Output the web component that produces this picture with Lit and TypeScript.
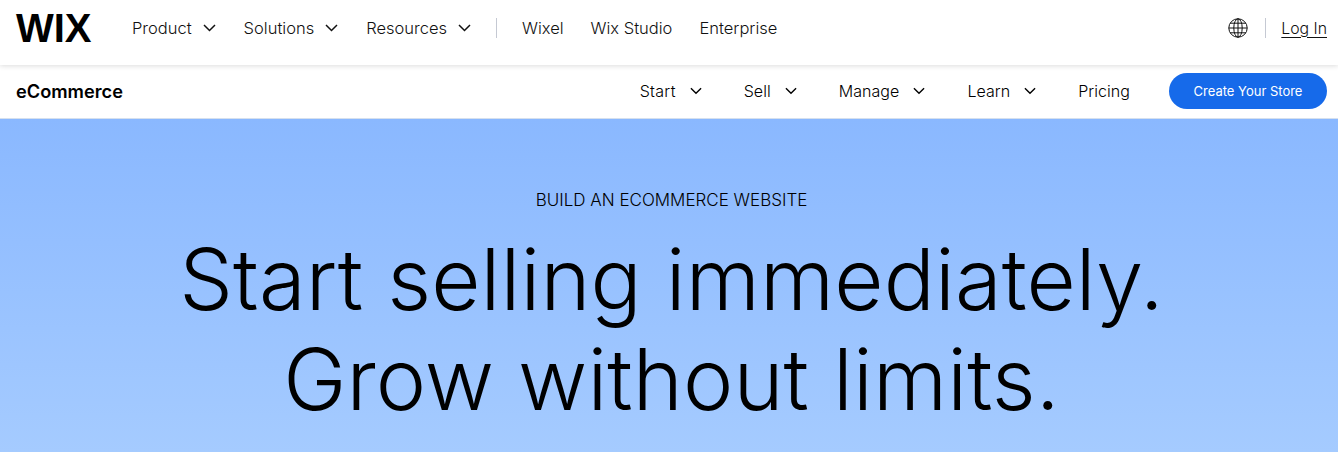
import {css, html, LitElement} from "lit";
import {customElement} from "lit/decorators.js";

const chevron = html`<svg class="chevron" viewBox="0 0 13 8" width="13" height="8"><path d="M1 1l5.5 5.5L12 1" fill="none" stroke="currentColor" stroke-width="1.5"/></svg>`;

@customElement("app-root")
export default class AppRoot extends LitElement {
    static styles = css`
        :host {
            display: block;
            height: 452px;
            overflow: hidden;
            font-family: Inter, "Liberation Sans", sans-serif;
            color: #000;
            background: #fff;
        }

        .top {
            position: relative;
            z-index: 1;
            display: flex;
            align-items: center;
            height: 65px;
            padding: 0 11px 9px 16px;
            box-sizing: border-box;
            background: #fff;
            box-shadow: 0 1px 5px rgba(0, 0, 0, 0.14);
            font-size: 16.5px;
            font-weight: 300;
            color: #111;
        }

        .logo {
            width: 75px;
            margin-right: 41px;
            font-family: "Liberation Sans", sans-serif;
            font-size: 40px;
            font-weight: 700;
            line-height: 1;
            color: #000;
        }

        .item {
            display: flex;
            align-items: center;
            gap: 11px;
            white-space: nowrap;
        }

        .links {
            display: flex;
            align-items: center;
            gap: 28px;
        }

        .rule {
            width: 1px;
            height: 20px;
            background: #c5c9d3;
        }

        .links .rule {
            margin: 0 -3px 0 -3px;
        }

        .links .tight {
            margin-left: -1px;
        }

        .spacer {
            flex: 1;
        }

        .globe {
            display: block;
            margin-right: 17px;
        }

        .login {
            margin-left: 15px;
            font-size: 15.8px;
            text-decoration: underline;
            text-underline-offset: 3px;
            text-decoration-thickness: 1px;
        }

        .sub {
            display: flex;
            align-items: center;
            height: 54px;
            padding: 0 11px 2px 16px;
            box-sizing: border-box;
            background: #fff;
            border-bottom: 1px solid #d5e0ee;
            font-size: 16px;
            font-weight: 350;
            letter-spacing: 0.05px;
        }

        .brand {
            font-size: 18.2px;
            font-weight: 600;
            letter-spacing: 0;
        }

        .sub .links {
            gap: 42px;
        }

        .sub .item {
            gap: 14px;
        }

        .sub .chevron {
            width: 12px;
        }

        .sub .start {
            letter-spacing: 0.3px;
        }

        .cta {
            display: flex;
            align-items: center;
            justify-content: center;
            width: 158px;
            height: 36px;
            margin-left: 39px;
            border: 0;
            border-radius: 18px;
            background: #166aea;
            color: #fff;
            font: 400 13px Inter, "Liberation Sans", sans-serif;
        }

        .hero {
            height: 333px;
            padding: 71px 0 0 5px;
            box-sizing: border-box;
            background: linear-gradient(180deg, #8ab8ff 0%, #a5cbff 100%);
            text-align: center;
        }

        .eyebrow {
            font-size: 17px;
            font-weight: 300;
            line-height: 20px;
        }

        h1 {
            margin: 20px 0 0;
            font-size: 85px;
            font-weight: 300;
            line-height: 100px;
            letter-spacing: 0.1px;
        }
    `;

    render() {
        return html`
            <header class="top">
                <div class="logo">WIX</div>
                <nav class="links">
                    <span class="item">Product ${chevron}</span>
                    <span class="item">Solutions ${chevron}</span>
                    <span class="item">Resources ${chevron}</span>
                    <span class="rule"></span>
                    <span class="item">Wixel</span>
                    <span class="item tight">Wix Studio</span>
                    <span class="item tight">Enterprise</span>
                </nav>
                <div class="spacer"></div>
                <svg class="globe" viewBox="0 0 20 20" width="20" height="20" fill="none" stroke="#111" stroke-width="1">
                    <circle cx="10" cy="10" r="9.2"/>
                    <ellipse cx="10" cy="10" rx="4.2" ry="9.2"/>
                    <path d="M10 .8v18.4M.8 10h18.4M2.2 5.2h15.6M2.2 14.8h15.6"/>
                </svg>
                <span class="rule"></span>
                <span class="login">Log In</span>
            </header>
            <div class="sub">
                <div class="brand">eCommerce</div>
                <div class="spacer"></div>
                <nav class="links">
                    <span class="item start">Start ${chevron}</span>
                    <span class="item">Sell ${chevron}</span>
                    <span class="item">Manage ${chevron}</span>
                    <span class="item">Learn ${chevron}</span>
                    <span class="item">Pricing</span>
                </nav>
                <button class="cta">Create Your Store</button>
            </div>
            <section class="hero">
                <div class="eyebrow">BUILD AN ECOMMERCE WEBSITE</div>
                <h1>Start selling immediately.<br />Grow without limits.</h1>
            </section>
        `;
    }
}
